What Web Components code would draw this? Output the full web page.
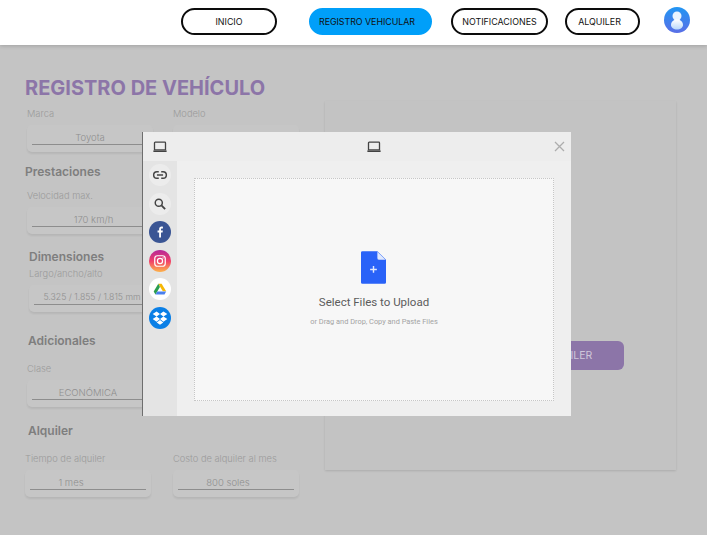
<!DOCTYPE html>
<html lang="es"><head><meta charset="utf-8"><title>Registro de vehículo</title>
<style>
html,body{margin:0;padding:0}
body{width:707px;height:535px;overflow:hidden;background:#c4c4c4;position:relative;font-family:Inter,"Liberation Sans",sans-serif}
</style></head><body>
<app-nav>
  <nav-pill style="width:96px">INICIO</nav-pill>
  <nav-pill active style="width:123px;margin-left:32px;padding-right:7px;letter-spacing:-.05px">REGISTRO VEHICULAR</nav-pill>
  <nav-pill style="width:97px;margin-left:19px">NOTIFICACIONES</nav-pill>
  <nav-pill style="width:75px;margin-left:17px;padding-right:6px">ALQUILER</nav-pill>
  <user-avatar style="margin-left:24px"></user-avatar>
</app-nav>
<register-page>
  <form-title>REGISTRO DE VEHÍCULO</form-title>
  <form-row style="margin-top:8px">
    <form-field label="Marca" value="Toyota"></form-field>
    <form-field label="Modelo" value=""></form-field>
  </form-row>
  <form-heading style="margin-top:12px">Prestaciones</form-heading>
  <form-row style="margin-top:10px">
    <form-field label="Velocidad max." value="170 km/h" shift="3.5"></form-field>
  </form-row>
  <form-heading style="margin-top:15px;margin-left:2px">Dimensiones</form-heading>
  <form-row style="margin-top:3px">
    <form-field label="Largo/ancho/alto" value="5.325 / 1.855 / 1.815 mm" style="margin-left:2px;--v-size:8.700px"></form-field>
  </form-row>
  <form-heading style="margin-top:21px;margin-left:1px">Adicionales</form-heading>
  <form-row style="margin-top:14px">
    <form-field label="Clase" value="ECONÓMICA" shift="-2"></form-field>
  </form-row>
  <form-heading style="margin-top:16px;margin-left:1px">Alquiler</form-heading>
  <form-row style="margin-top:14px;margin-left:-2px;gap:22px">
    <form-field label="Tiempo de alquiler" value="1 mes" shift="-17"></form-field>
    <form-field label="Costo de alquiler al mes" value="800 soles" shift="-8"></form-field>
  </form-row>
  <preview-card slot="side"><action-button>ALQUILER</action-button></preview-card>
</register-page>
<upload-modal>
  <source-btn slot="sources" kind="link"></source-btn>
  <source-btn slot="sources" kind="search"></source-btn>
  <source-btn slot="sources" kind="facebook"></source-btn>
  <source-btn slot="sources" kind="instagram"></source-btn>
  <source-btn slot="sources" kind="drive"></source-btn>
  <source-btn slot="sources" kind="dropbox"></source-btn>
</upload-modal>
<script>
const def=(name,html,extra={})=>{
  customElements.define(name,class extends HTMLElement{
    constructor(){super();this.attachShadow({mode:'open'}).innerHTML=html;}
    connectedCallback(){extra.init&&extra.init.call(this);}
  });
};
const LAPTOP='<svg width="14" height="12" viewBox="0 0 14 12"><path d="M2.2 1.2h9.6a.7.7 0 0 1 .7.7v7H1.500v-7a.7.7 0 0 1 .7-.7z" fill="none" stroke="#424242" stroke-width="1.300"/><path d="M.3 9.500h13.400v.7a.9.9 0 0 1-.9.9H1.200a.9.9 0 0 1-.9-.9z" fill="#424242"/></svg>';
def('app-nav',`<style>:host{display:flex;align-items:flex-start;justify-content:flex-end;box-sizing:border-box;height:45px;padding:8px 17px 0 0;background:#fff;box-shadow:0 1px 4px rgba(0,0,0,.18);position:relative;z-index:2}</style><slot></slot>`);
def('nav-pill',`<style>:host{display:flex;align-items:center;justify-content:center;box-sizing:border-box;height:27px;border:2px solid #0c0c0c;border-radius:14px;font:400 8.900px Inter,"Liberation Sans",sans-serif;color:#111;background:#fff;white-space:nowrap}
:host([active]){background:#009ff9;border-color:#009ff9}</style><slot></slot>`);
def('user-avatar',`<style>:host{display:block;width:26px;height:26px;margin-top:-1px}svg{display:block}</style><svg width="26" height="26" viewBox="0 0 26 26"><defs><linearGradient id="g" x1="0" y1="0" x2="0" y2="1"><stop offset="0" stop-color="#2196f3"/><stop offset="1" stop-color="#5a6fe6"/></linearGradient><linearGradient id="w" x1="0" y1="0" x2="0" y2="1"><stop offset="0" stop-color="#fff"/><stop offset="1" stop-color="#b8d8fb"/></linearGradient></defs><circle cx="13" cy="13" r="13" fill="url(#g)"/><circle cx="13" cy="9" r="4.500" fill="#eaf4ff"/><path d="M13 12.500c3.800 0 6 2.600 6 5.500 0 2.600-2.700 4.600-6 4.600s-6-2-6-4.600c0-2.900 2.200-5.500 6-5.500z" fill="url(#w)"/></svg>`);
def('register-page',`<style>:host{display:grid;grid-template-columns:325px 351px;height:490px}
.left{padding:30px 0 0 27px;display:block}
.right{padding-top:56px}</style><div class="left"><slot></slot></div><div class="right"><slot name="side"></slot></div>`);
def('form-title',`<style>:host{display:block;margin-left:-2px;padding-top:1px;height:24px;font:700 20px/24px Inter,"Liberation Sans",sans-serif;color:#8c75a8;white-space:nowrap}</style><slot></slot>`);
def('form-heading',`<style>:host{display:block;margin-left:-2px;height:16px;font:600 12px/16px Inter,"Liberation Sans",sans-serif;color:#7e7e7e;white-space:nowrap}</style><slot></slot>`);
def('form-row',`<style>:host{display:flex;gap:20px}</style><slot></slot>`);
def('form-field',`<style>:host{display:block;width:126px;flex:none}
.l{height:12px;font:300 9.300px/12px Inter,"Liberation Sans",sans-serif;color:#9b9b9b;white-space:nowrap;margin-bottom:5px}
.b{box-sizing:border-box;height:27px;background:#c6c6c6;border-radius:5px;box-shadow:0 2px 2px rgba(0,0,0,.07);padding:5px 5px 0}
.v{box-sizing:border-box;height:15px;border-bottom:1px solid #8d8d8d;text-align:center;font:300 var(--v-size,9.500px)/15px Inter,"Liberation Sans",sans-serif;color:#8f8f8f;white-space:nowrap}</style>
<div class="l"></div><div class="b"><div class="v"></div></div>`,{init(){
  const s=this.shadowRoot;s.querySelector('.l').textContent=this.getAttribute('label');
  const v=s.querySelector('.v');v.textContent=this.getAttribute('value');
  const sh=+(this.getAttribute('shift')||0);v.style.paddingLeft=Math.max(0,sh*2)+'px';v.style.paddingRight=Math.max(0,-sh*2)+'px';
}});
def('preview-card',`<style>:host{display:flex;justify-content:flex-end;align-items:flex-start;box-sizing:border-box;height:369px;background:#c3c3c3;box-shadow:0 1px 2px rgba(0,0,0,.12);padding:240px 52px 0 0}</style><slot></slot>`);
def('action-button',`<style>:host{display:flex;align-items:center;justify-content:center;box-sizing:border-box;width:114px;height:29px;background:#8c75a8;border-radius:6px;font:400 10.500px Inter,"Liberation Sans",sans-serif;color:#cfc7da}</style><slot></slot>`);
def('upload-modal',`<style>:host{position:absolute;left:142px;top:132px;width:429px;height:284px;box-sizing:border-box;border-left:1px solid #6e6e6e;background:#efefef;display:grid;grid-template-columns:34px 1fr;grid-template-rows:29px 1fr;font-family:Roboto,"Liberation Sans",sans-serif;z-index:3}
.top{grid-column:1/3;display:flex;align-items:center;background:#ededed;position:relative}
.top .side{width:34px;display:flex;justify-content:center}
.top .mid{flex:1;display:flex;justify-content:center}
.x{position:absolute;right:6px;top:9px;display:block}
.sources{background:#e4e4e4;display:flex;flex-direction:column;align-items:center;gap:6.600px;padding-top:3px}
.main{padding:17px 17px 15px}
.drop{box-sizing:border-box;height:100%;background:#f7f7f7;border:1px dotted #c6c6c6;display:flex;flex-direction:column;align-items:center;padding-top:72px}
.doc{display:block;margin-left:-2px}
.t{margin-top:10px;font:400 11.500px/16px Roboto,"Liberation Sans",sans-serif;color:#5c5c5c}
.s{margin-top:7px;font:400 7.400px/10px Roboto,"Liberation Sans",sans-serif;color:#a3a3a3}</style>
<div class="top"><div class="side">${LAPTOP}</div><div class="mid">${LAPTOP}</div>
<svg class="x" width="11" height="11" viewBox="0 0 11 11"><path d="M1 1l9 9M10 1l-9 9" stroke="#adadad" stroke-width="1.300" fill="none"/></svg></div>
<div class="sources"><slot name="sources"></slot></div>
<div class="main"><div class="drop">
<svg class="doc" width="25" height="33" viewBox="0 0 26 34"><path d="M1.500 0H17l9 9v23.500a1.500 1.500 0 0 1-1.500 1.500h-23A1.500 1.500 0 0 1 0 32.500v-31A1.500 1.500 0 0 1 1.500 0z" fill="#2962f8"/><path d="M17 .5v6.500a2 2 0 0 0 2 2h6.500z" fill="#dfe8fd"/><path d="M13 15.500v7M9.500 19h7" stroke="#dfe8fd" stroke-width="1.500"/></svg>
<div class="t">Select Files to Upload</div><div class="s">or Drag and Drop, Copy and Paste Files</div></div></div>`);
const ICONS={
 link:['#ececec','<path d="M8 6.300H6.500a2.700 2.700 0 0 0 0 5.400H8M10 6.300h1.500a2.700 2.700 0 0 1 0 5.400H10M6.500 9h5" fill="none" stroke="#444" stroke-width="1.200"/>'],
 search:['#ececec','<circle cx="8" cy="8" r="2.900" fill="none" stroke="#444" stroke-width="1.200"/><path d="M10.200 10.200l3 3" stroke="#444" stroke-width="1.500"/>'],
 facebook:['#3a5594','<path d="M9.800 13.500V9.400h1.300l.25-1.600H9.800V6.900c0-.5.200-.8.800-.8h.8V4.700c-.25 0-.65-.1-1.100-.1-1.250 0-2 .8-2 2v1.200H7v1.600h1.300v4.100z" fill="#fff"/>'],
 instagram:['url(#ig)','<rect x="4.700" y="4.700" width="8.600" height="8.600" rx="2.300" fill="none" stroke="#fff" stroke-width="1"/><circle cx="9" cy="9" r="2.100" fill="none" stroke="#fff" stroke-width="1"/><circle cx="11.500" cy="6.500" r=".55" fill="#fff"/>'],
 drive:['#fff','<g transform="translate(1.300 1.400) scale(.85)"><path d="M7.400 3.800h3.200l4.400 7.400h-3.200z" fill="#f6b704"/><path d="M7.400 3.800L3 11.300l1.700 2.900L9 7z" fill="#2a9d4e"/><path d="M6.400 11.300H15l-1.600 2.900H4.700z" fill="#4a80ee"/></g>'],
 dropbox:['#0a7fe6','<path d="M6.200 3.600L3 5.700l3.200 2.100 2.800-2.100zM11.800 3.600L9 5.700l2.800 2.100L15 5.700zM3 9.900L6.200 12 9 9.900 6.200 7.800zM15 9.900L11.800 12 9 9.900l2.800-2.100zM6.300 12.700L9 14.600l2.700-1.900L9 10.700z" fill="#fff"/>']
};
def('source-btn',`<style>:host{display:block;width:22px;height:22px}svg{display:block}</style><svg width="22" height="22" viewBox="0 0 18 18"><defs><linearGradient id="ig" x1=".5" y1="1" x2=".5" y2="0"><stop offset="0" stop-color="#fdb44b"/><stop offset=".5" stop-color="#f0406a"/><stop offset="1" stop-color="#b5279a"/></linearGradient></defs><circle class="c" cx="9" cy="9" r="9"/><g class="i"></g></svg>`,{init(){
  const [bg,ic]=ICONS[this.getAttribute('kind')];const s=this.shadowRoot;
  s.querySelector('.c').setAttribute('fill',bg);s.querySelector('.i').innerHTML=ic;
}});
</script>
</body></html>
